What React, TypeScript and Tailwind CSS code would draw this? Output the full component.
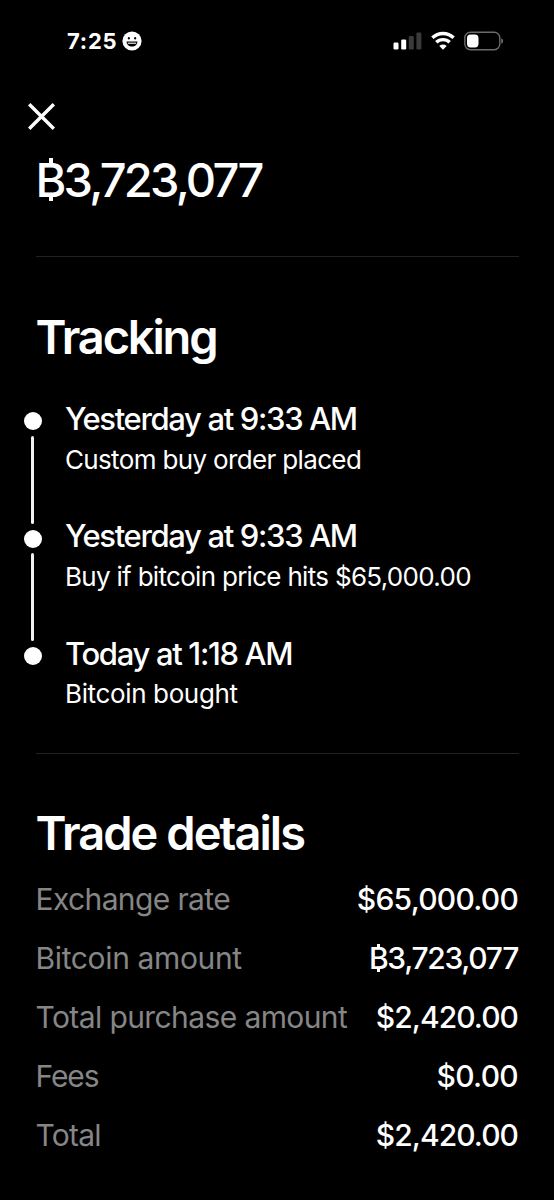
import React from "react";

type TrackingStep = {
  time: string;
  detail: string;
  timeClass: string;
  detailClass: string;
};

type DetailRow = {
  label: string;
  value: string;
  labelClass: string;
  valueClass: string;
  bitcoin?: boolean;
};

const steps: TrackingStep[] = [
  {
    time: "Yesterday at 9:33 AM",
    detail: "Custom buy order placed",
    timeClass: "tracking-[-1.35px]",
    detailClass: "tracking-[-0.65px]",
  },
  {
    time: "Yesterday at 9:33 AM",
    detail: "Buy if bitcoin price hits $65,000.00",
    timeClass: "tracking-[-1.35px]",
    detailClass: "tracking-[-0.7px]",
  },
  {
    time: "Today at 1:18 AM",
    detail: "Bitcoin bought",
    timeClass: "tracking-[-1.33px]",
    detailClass: "tracking-[-0.36px]",
  },
];

const rows: DetailRow[] = [
  { label: "Exchange rate", value: "$65,000.00", labelClass: "tracking-[-0.62px]", valueClass: "tracking-[-0.75px]" },
  { label: "Bitcoin amount", value: "3,723,077", labelClass: "tracking-[-0.36px]", valueClass: "tracking-[-1.3px]", bitcoin: true },
  { label: "Total purchase amount", value: "$2,420.00", labelClass: "tracking-[-0.6px]", valueClass: "tracking-[-0.95px]" },
  { label: "Fees", value: "$0.00", labelClass: "tracking-[-1.1px]", valueClass: "tracking-[-0.7px]" },
  { label: "Total", value: "$2,420.00", labelClass: "tracking-[-0.75px]", valueClass: "tracking-[-0.95px]" },
];

// B with short ticks above and below, no bar through the bowls
const BitcoinSign: React.FC = () => (
  <span className="relative before:absolute before:left-[0.28em] before:top-[0.14em] before:h-[0.13em] before:w-[0.1em] before:bg-white after:absolute after:left-[0.28em] after:top-[0.94em] after:h-[0.13em] after:w-[0.1em] after:bg-white">
    B
  </span>
);

const StatusBar: React.FC = () => (
  <div className="flex h-[82px] items-center justify-between pl-[67px] pr-[50px]">
    <div className="flex items-center gap-[5px]">
      <span className="text-[22px] font-bold leading-7 tracking-[0.75px]">7:25</span>
      <svg width="20" height="20" viewBox="0 0 20 20">
        <circle cx="10" cy="10" r="9.6" fill="#fff" />
        <ellipse cx="6.9" cy="7.2" rx="1" ry="1.3" fill="#000" />
        <ellipse cx="13.1" cy="7.2" rx="1" ry="1.3" fill="#000" />
        <path d="M4.6 10.6h10.8c0 3.3-2.3 5-5.4 5s-5.4-1.7-5.4-5z" fill="#000" />
        <path d="M5.8 12.2h8.4" stroke="#fff" strokeWidth="1.1" />
      </svg>
    </div>

    <div className="flex items-center">
      {/* Signal */}
      <svg width="29" height="20" viewBox="0 0 29 20">
        <rect x="0.5" y="11.5" width="5" height="7" rx="1.3" fill="#fff" />
        <rect x="8.2" y="8.5" width="5" height="10" rx="1.3" fill="#fff" />
        <rect x="15.8" y="5" width="5" height="13.5" rx="1.3" fill="#3a3a3a" />
        <rect x="23.4" y="1.5" width="5" height="17" rx="1.3" fill="#3a3a3a" />
      </svg>
      {/* Wi-Fi */}
      <svg width="24" height="20" viewBox="0 0 24 20" className="ml-[9px]" fill="none" stroke="#fff" strokeWidth="3.4">
        <path d="M1.4 6.8a15.2 15.2 0 0 1 21.2 0" />
        <path d="M5.3 11.3a9.6 9.6 0 0 1 13.4 0" />
        <path d="M12 18.8l-3.7-3.9a5.4 5.4 0 0 1 7.4 0z" fill="#fff" stroke="none" />
      </svg>
      {/* Battery */}
      <svg width="40" height="20" viewBox="0 0 40 20" className="ml-[9px]">
        <rect x="0.8" y="1.3" width="35" height="17.4" rx="5.6" fill="none" stroke="#6b6b6b" strokeWidth="1.4" />
        <rect x="3" y="3.6" width="11.5" height="12.8" rx="3.6" fill="#fff" />
        <path d="M37.2 7.2c1.2.4 1.9 1.5 1.9 2.8s-.7 2.4-1.9 2.8z" fill="#6b6b6b" />
      </svg>
    </div>
  </div>
);

const Rail: React.FC = () => (
  <div className="mt-[13.3px] flex w-[18px] flex-col items-center">
    {steps.map((step, index) => (
      <React.Fragment key={index}>
        <span className="size-[18px] shrink-0 rounded-full bg-white" />
        {index < steps.length - 1 && (
          <span className="mb-[5.8px] mt-[5.5px] h-[88px] w-[3.4px] rounded-full bg-[#f2f2f2]" />
        )}
      </React.Fragment>
    ))}
  </div>
);

const App: React.FC = () => {
  return (
    <main className="h-[1200px] w-[554px] overflow-hidden bg-black font-['Inter','Liberation_Sans',sans-serif] text-white">
      <StatusBar />

      <button aria-label="Close" className="ml-[28px] mt-[21px] block">
        <svg width="27" height="27" viewBox="0 0 27 27" stroke="#fff" strokeWidth="3.4">
          <path d="M1.2 1.2l24.6 24.6M25.8 1.2L1.2 25.8" />
        </svg>
      </button>

      <h1 className="ml-[35.5px] mt-[22px] text-[47px] font-[550] leading-[56px] tracking-[-2.8px]">
        <BitcoinSign />
        3,723,077
      </h1>
      <hr className="mx-[35.5px] mt-12 border-[#222]" />

      {/* Tracking */}
      <section>
        <h2 className="ml-[35.5px] mt-[52px] text-[47px] font-[580] leading-[56px] tracking-[-2.15px]">Tracking</h2>
        <div className="ml-[23.6px] mt-[34px] flex gap-[23.4px]">
          <Rail />
          <ul className="flex flex-col gap-[38.5px]">
            {steps.map((step, index) => (
              <li key={index} className="whitespace-nowrap">
                <p className={`text-[31px] font-[550] leading-10 ${step.timeClass}`}>{step.time}</p>
                <p className={`mt-[2.8px] text-[26px] leading-9 ${step.detailClass}`}>{step.detail}</p>
              </li>
            ))}
          </ul>
        </div>
      </section>
      <hr className="mx-[35.5px] mt-[41px] border-[#222]" />

      {/* Trade details */}
      <section className="pl-[35.5px] pr-9">
        <h2 className="mt-[51px] text-[47px] font-[580] leading-[56px] tracking-[-1.95px]">Trade details</h2>
        <dl className="mt-[17.8px] flex flex-col gap-[19px]">
          {rows.map((row) => (
            <div key={row.label} className="flex items-center justify-between whitespace-nowrap text-[30px] leading-10">
              <dt className={`text-[#868686] ${row.labelClass}`}>{row.label}</dt>
              <dd className={`font-[550] ${row.valueClass}`}>
                {row.bitcoin && <BitcoinSign />}
                {row.value}
              </dd>
            </div>
          ))}
        </dl>
      </section>
    </main>
  );
};

export default App;
